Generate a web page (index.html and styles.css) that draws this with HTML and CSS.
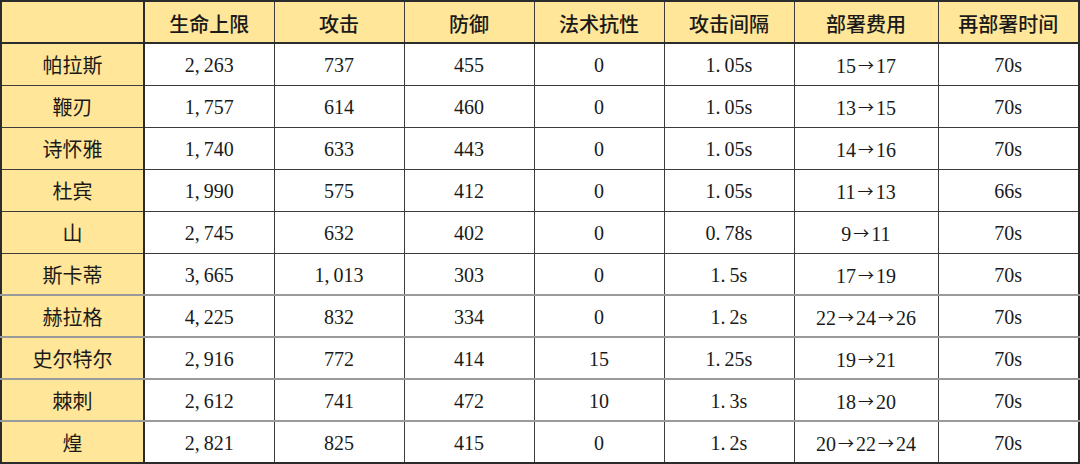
FILE: index.html
```html
<!DOCTYPE html>
<html lang="zh">
<head>
<meta charset="utf-8">
<title>干员数据</title>
<link rel="stylesheet" href="styles.css">
</head>
<body>
<table class="stats">
  <colgroup>
    <col class="c-name"><col class="c-n"><col class="c-n"><col class="c-n"><col class="c-n"><col class="c-n"><col class="c-cost"><col class="c-time">
  </colgroup>
  <thead>
    <tr>
      <th></th><th>生命上限</th><th>攻击</th><th>防御</th><th>法术抗性</th><th>攻击间隔</th><th>部署费用</th><th>再部署时间</th>
    </tr>
  </thead>
  <tbody>
    <tr><th>帕拉斯</th><td>2,&#8201;263</td><td>737</td><td>455</td><td>0</td><td>1.&#8201;05s</td><td>15<span class="ar">→</span>17</td><td>70s</td></tr>
    <tr><th>鞭刃</th><td>1,&#8201;757</td><td>614</td><td>460</td><td>0</td><td>1.&#8201;05s</td><td>13<span class="ar">→</span>15</td><td>70s</td></tr>
    <tr><th>诗怀雅</th><td>1,&#8201;740</td><td>633</td><td>443</td><td>0</td><td>1.&#8201;05s</td><td>14<span class="ar">→</span>16</td><td>70s</td></tr>
    <tr><th>杜宾</th><td>1,&#8201;990</td><td>575</td><td>412</td><td>0</td><td>1.&#8201;05s</td><td>11<span class="ar">→</span>13</td><td>66s</td></tr>
    <tr><th>山</th><td>2,&#8201;745</td><td>632</td><td>402</td><td>0</td><td>0.&#8201;78s</td><td>9<span class="ar">→</span>11</td><td>70s</td></tr>
    <tr class="soft"><th>斯卡蒂</th><td>3,&#8201;665</td><td>1,&#8201;013</td><td>303</td><td>0</td><td>1.&#8201;5s</td><td>17<span class="ar">→</span>19</td><td>70s</td></tr>
    <tr class="soft"><th>赫拉格</th><td>4,&#8201;225</td><td>832</td><td>334</td><td>0</td><td>1.&#8201;2s</td><td>22<span class="ar">→</span>24<span class="ar">→</span>26</td><td>70s</td></tr>
    <tr class="soft"><th>史尔特尔</th><td>2,&#8201;916</td><td>772</td><td>414</td><td>15</td><td>1.&#8201;25s</td><td>19<span class="ar">→</span>21</td><td>70s</td></tr>
    <tr class="soft"><th>棘刺</th><td>2,&#8201;612</td><td>741</td><td>472</td><td>10</td><td>1.&#8201;3s</td><td>18<span class="ar">→</span>20</td><td>70s</td></tr>
    <tr class="last"><th>煌</th><td>2,&#8201;821</td><td>825</td><td>415</td><td>0</td><td>1.&#8201;2s</td><td>20<span class="ar">→</span>22<span class="ar">→</span>24</td><td>70s</td></tr>
  </tbody>
</table>
</body>
</html>
```

FILE: styles.css
```css
html, body {
  margin: 0;
  padding: 0;
  background: #ffffff;
}

.stats {
  border-collapse: collapse;
  table-layout: fixed;
  width: 1079px;
  margin-left: 0;
  border: 2px solid #2b2b2b;
  font-family: "Liberation Serif", "Noto Sans CJK SC", serif;
  font-size: 20px;
  color: #1a1a1a;
}

.c-name { width: 143px; }
.c-n { width: 130px; }
.c-cost { width: 144px; }
.c-time { width: 141px; }

.stats th,
.stats td {
  border: 1px solid #3c3c3c;
  text-align: center;
  vertical-align: middle;
  padding: 2px 0 0 0;
  white-space: nowrap;
}

.stats thead tr {
  height: 42px;
}

.stats thead th {
  background: #ffe699;
  font-family: "Noto Sans CJK SC", sans-serif;
  font-weight: 500;
  font-size: 20px;
  line-height: 24px;
  border-bottom: 2px solid #2b2b2b;
  padding-top: 4px;
}

.stats tbody tr {
  height: 42px;
}

.stats tbody td,
.stats tbody th {
  line-height: 24px;
}

.stats tbody th {
  background: #ffe699;
  font-family: "Noto Sans CJK SC", sans-serif;
  font-weight: 400;
  font-size: 20px;
  border-right: 2px solid #2b2b2b;
}

.stats thead th:first-child {
  border-right: 2px solid #2b2b2b;
}

.stats tr.soft th,
.stats tr.soft td {
  border-bottom: 2px solid #9a9a9a;
}

.ar {
  font-family: "Noto Sans CJK SC", sans-serif;
  font-size: 16px;
  display: inline-block;
  width: 20px;
  text-align: center;
  vertical-align: 2px;
}
```
